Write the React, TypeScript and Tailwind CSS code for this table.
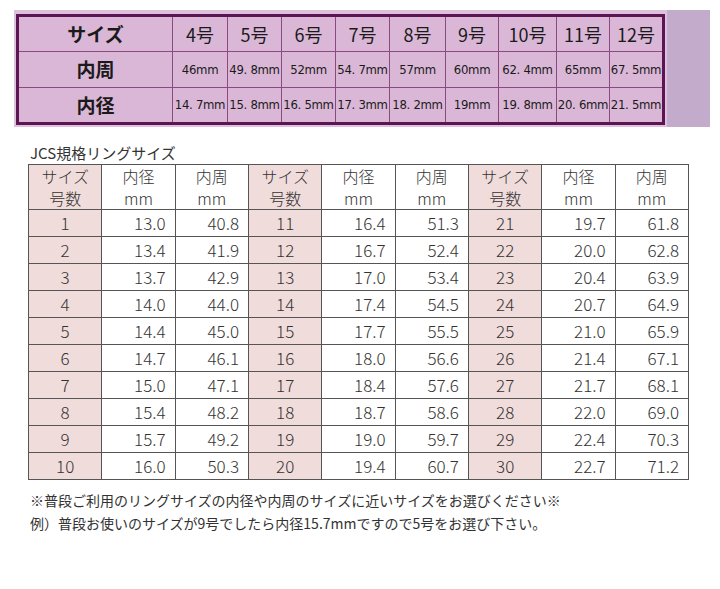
const SIZES = ["4号", "5号", "6号", "7号", "8号", "9号", "10号", "11号", "12号"];
const CIRC = ["46mm", "49. 8mm", "52mm", "54. 7mm", "57mm", "60mm", "62. 4mm", "65mm", "67. 5mm"];
const DIAM = ["14. 7mm", "15. 8mm", "16. 5mm", "17. 3mm", "18. 2mm", "19mm", "19. 8mm", "20. 6mm", "21. 5mm"];
const TOP_W = [155, 55, 54, 54, 54, 56, 53, 58, 53, 54];

const JCS: [number, string, string][] = [
  [1, "13.0", "40.8"], [2, "13.4", "41.9"], [3, "13.7", "42.9"], [4, "14.0", "44.0"], [5, "14.4", "45.0"],
  [6, "14.7", "46.1"], [7, "15.0", "47.1"], [8, "15.4", "48.2"], [9, "15.7", "49.2"], [10, "16.0", "50.3"],
  [11, "16.4", "51.3"], [12, "16.7", "52.4"], [13, "17.0", "53.4"], [14, "17.4", "54.5"], [15, "17.7", "55.5"],
  [16, "18.0", "56.6"], [17, "18.4", "57.6"], [18, "18.7", "58.6"], [19, "19.0", "59.7"], [20, "19.4", "60.7"],
  [21, "19.7", "61.8"], [22, "20.0", "62.8"], [23, "20.4", "63.9"], [24, "20.7", "64.9"], [25, "21.0", "65.9"],
  [26, "21.4", "67.1"], [27, "21.7", "68.1"], [28, "22.0", "69.0"], [29, "22.4", "70.3"], [30, "22.7", "71.2"],
];

const jp = { fontFamily: '"Noto Sans CJK JP", "Noto Sans", sans-serif' };
const narrow = { fontFamily: '"Liberation Sans Narrow", "DejaVu Sans Condensed", "Noto Sans CJK JP", sans-serif' };

function TopTable() {
  const cell = "border border-[#8a4a80] text-center text-[#1a1a1a] overflow-hidden";
  return (
    <div className="mt-[10px] ml-[14px] flex h-[117px] w-[696px]">
      <div className="bg-[#dcc0dc] pl-[2px] pt-[4px] pr-[2px]">
        <table className="w-[649px] table-fixed border-collapse border-[3px] border-[#5c1552] bg-[#dab7d7]" style={jp}>
          <colgroup>
            {TOP_W.map((w, i) => (
              <col key={i} style={{ width: w }} />
            ))}
          </colgroup>
          <tbody>
            <tr className="h-[36px]">
              <td className={`${cell} text-[19px] font-bold`}>サイズ</td>
              {SIZES.map((s) => (
                <td key={s} className={`${cell} text-[18px]`}>{s}</td>
              ))}
            </tr>
            <tr className="h-[36px]">
              <td className={`${cell} text-[19px] font-bold`}>内周</td>
              {CIRC.map((s) => (
                <td key={s} className={`${cell} text-[13px] tracking-[-0.3px] whitespace-nowrap`} style={narrow}>{s}</td>
              ))}
            </tr>
            <tr className="h-[36px]">
              <td className={`${cell} text-[19px] font-bold`}>内径</td>
              {DIAM.map((s) => (
                <td key={s} className={`${cell} text-[13px] tracking-[-0.3px] whitespace-nowrap`} style={narrow}>{s}</td>
              ))}
            </tr>
          </tbody>
        </table>
      </div>
      <div className="flex-1 bg-[#c3abcb]" />
    </div>
  );
}

function JcsTable() {
  const b = "border border-[#555]";
  const pink = `${b} bg-[#f1dcdc] text-center`;
  const num = `${b} text-right pr-[9px]`;
  const rows = Array.from({ length: 10 }, (_, i) => [JCS[i], JCS[i + 10], JCS[i + 20]]);
  return (
    <table className="ml-[28px] mt-[1px] w-[661px] table-fixed border-collapse text-[17px] font-light text-[#333]" style={jp}>
      <thead>
        <tr className="h-[44px] text-[16px] leading-[22px]">
          {[0, 1, 2].map((g) => [
            <th key={`s${g}`} className={`${pink} font-light`}>
              サイズ<br />号数
            </th>,
            <th key={`d${g}`} className={`${b} font-light`}>
              内径<br />mm
            </th>,
            <th key={`c${g}`} className={`${b} font-light`}>
              内周<br />mm
            </th>,
          ])}
        </tr>
      </thead>
      <tbody>
        {rows.map((r, i) => (
          <tr key={i} className="h-[27px] leading-[24px]">
            {r.map(([n, d, c]) => [
              <td key={`s${n}`} className={pink}>{n}</td>,
              <td key={`d${n}`} className={num}>{d}</td>,
              <td key={`c${n}`} className={num}>{c}</td>,
            ])}
          </tr>
        ))}
      </tbody>
    </table>
  );
}

export default function App() {
  return (
    <div className="h-[589px] w-[720px] bg-white">
      <TopTable />
      <div className="ml-[30px] mt-[16px] text-[15px] leading-[20px] text-[#333]" style={jp}>
        JCS規格リングサイズ
      </div>
      <JcsTable />
      <div className="ml-[30px] mt-[9px] text-[14px] leading-[23px] text-[#333]" style={jp}>
        <p>※普段ご利用のリングサイズの内径や内周のサイズに近いサイズをお選びください※</p>
        <p>例）普段お使いのサイズが9号でしたら内径15.7mmですので5号をお選び下さい。</p>
      </div>
    </div>
  );
}
